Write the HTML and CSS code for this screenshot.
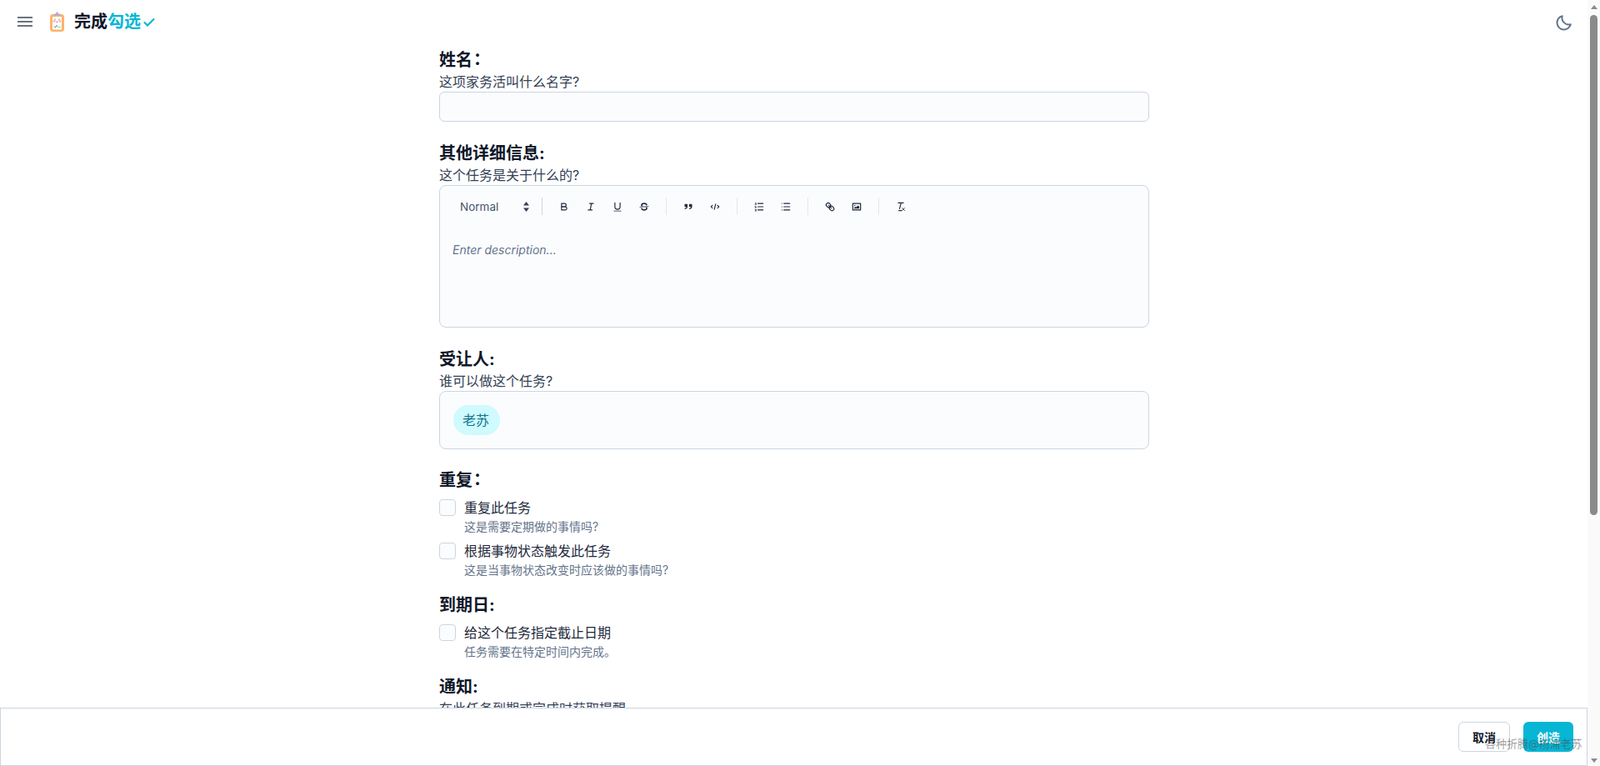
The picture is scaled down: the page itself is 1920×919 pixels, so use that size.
FILE: index.html
```html
<!doctype html>
<html lang="zh-CN">
  <head>
    <meta charset="utf-8">
    <meta name="viewport" content="width=device-width, initial-scale=1">
    <title>完成勾选</title>
    <link rel="stylesheet" href="styles.css">
  </head>
  <body>
    <div class="app">
      <div class="page">
        <header class="navbar">
          <svg class="menu-icon" viewBox="0 0 18 12"><path d="M0 1h18M0 6h18M0 11h18"/></svg>
          <svg class="logo" viewBox="0 0 17 24">
            <rect x="0" y="3" width="17" height="21" rx="3.5" fill="#fdb26e"/>
            <rect x="3" y="6" width="11" height="15.5" rx="1" fill="#fff"/>
            <path d="M5 4.5h7v-2H9.6V.4H7.4v2.1H5z" fill="#a5a9e0"/>
            <circle cx="5" cy="11.5" r="1.3" fill="#fca5a5"/>
            <circle cx="12" cy="11.5" r="1.3" fill="#fca5a5"/>
            <path d="M5.5 9l1.2.8M11.5 9l-1.2.8M7.5 12q1 1 2 0" fill="none" stroke="#44403c" stroke-width=".8"/>
            <path d="M5 17.5l1.3 1.3 2.4-2.6" fill="none" stroke="#44403c" stroke-width=".9"/>
            <path d="M9 18.5h4" stroke="#5eead4" stroke-width="1"/>
          </svg>
          <div class="brand"><span>完成</span><span class="brand-accent">勾选</span>
            <svg class="brand-check" viewBox="0 0 14 11"><path d="M1 5.5l4 4 8-8"/></svg>
          </div>
          <svg class="moon" viewBox="0 0 20 20"><path d="M17.8 12.3A8.3 8.3 0 0 1 7.7 2.2a8.3 8.3 0 1 0 10.1 10.1z"/></svg>
        </header>

        <main class="content">
          <form class="task-form">
            <h3 class="field-title">姓名<span class="wide-colon" lang="zh-TW">：</span></h3>
            <p class="field-hint">这项家务活叫什么名字?</p>
            <div class="text-input"></div>

            <h3 class="field-title">其他详细信息:</h3>
            <p class="field-hint">这个任务是关于什么的?</p>
            <div class="editor">
              <div class="toolbar">
                <div class="picker">
                  <span>Normal</span>
                  <svg class="picker-arrows" viewBox="0 0 7 12"><path d="M3.5 0L7 4.6H0zM3.5 12L0 7.4h7z"/></svg>
                </div>
                <div class="tool-group">
                  <svg class="tool" viewBox="0 0 18 18"><path class="st" d="M5,4H9.5A2.5,2.5,0,0,1,12,6.5v0A2.5,2.5,0,0,1,9.5,9H5V4Z"/><path class="st" d="M5,9h5.5A2.5,2.5,0,0,1,13,11.5v0A2.5,2.5,0,0,1,10.5,14H5V9Z"/></svg>
                  <svg class="tool" viewBox="0 0 18 18"><path class="st" d="M7 4h6M5 14h6M8 14l2-10"/></svg>
                  <svg class="tool" viewBox="0 0 18 18"><path class="st" d="M5,3V9a4,4,0,0,0,4,4h0a4,4,0,0,0,4-4V3"/><rect class="fl" x="3" y="15" width="12" height="1" rx=".5"/></svg>
                  <svg class="tool" viewBox="0 0 18 18"><path class="st thin" d="M15.5 8.5l-13 1"/><path class="fl" d="M9.007,8C6.542,7.791,6,7.519,6,6.5,6,5.792,7.283,5,9,5c1.571,0,2.765.679,2.969,1.309a1,1,0,0,0,1.9-.617C13.356,4.106,11.354,3,9,3,6.2,3,4,4.538,4,6.5a3.2,3.2,0,0,0,.5,1.843Z"/><path class="fl" d="M8.984,10C11.457,10.208,12,10.479,12,11.5c0,.708-1.283,1.5-3,1.5-1.571,0-2.765-.679-2.969-1.309a1,1,0,1,0-1.9.617C4.644,13.894,6.646,15,9,15c2.8,0,5-1.538,5-3.5a3.2,3.2,0,0,0-.5-1.843Z"/></svg>
                </div>
                <div class="tool-group">
                  <svg class="tool" viewBox="0 0 18 18"><rect class="fl st" x="4" y="5.5" width="3" height="3"/><rect class="fl st" x="11" y="5.5" width="3" height="3"/><path class="st" d="M7,8.5C7,10.4,5.5,12,4,12"/><path class="st" d="M14,8.5c0,1.9-1.5,3.5-3,3.5"/></svg>
                  <svg class="tool" viewBox="0 0 18 18"><path class="st" d="M5 7L3 9l2 2M13 7l2 2-2 2M10 5l-2 8"/></svg>
                </div>
                <div class="tool-group">
                  <svg class="tool" viewBox="0 0 18 18"><path class="st" d="M7 4h8M7 9h8M7 14h8"/><path class="st thin" d="M2.5 5.5h2"/><path class="fl" d="M3.5 2.5h1v3h-1zM2.5 2.5h1v.8h-1zM2.3 8h2.4v.8H3.2v.6h1.5v2H2.3v-.8h1.5v-.5H2.3zM2.3 13h2.4v3H2.3v-.7h1.5v-.4H2.8v-.7h1v-.4H2.3z"/></svg>
                  <svg class="tool" viewBox="0 0 18 18"><path class="st" d="M6 4h9M6 9h9M6 14h9M3 4h0M3 9h0M3 14h0"/></svg>
                </div>
                <div class="tool-group">
                  <svg class="tool" viewBox="0 0 18 18"><path class="st" d="M7 7l4 4"/><path class="st" d="M8.9,4.577a3.476,3.476,0,0,1,.36,4.679A3.476,3.476,0,0,1,4.577,8.9C3.185,7.5,2.331,6.072,3.331,5.072l1.5-1.5C5.831,2.572,7.5,3.185,8.9,4.577Z"/><path class="st" d="M13.423,9.1a3.476,3.476,0,0,0-4.679-.36,3.476,3.476,0,0,0,.36,4.679c1.392,1.392,3.181,2.246,4.321,1.392l1.5-1.5C15.928,12.169,14.815,10.5,13.423,9.1Z"/></svg>
                  <svg class="tool" viewBox="0 0 18 18"><rect class="st" x="3" y="4" width="12" height="10"/><circle class="fl" cx="6" cy="7" r="1"/><path class="fl" d="M5 12v-1l2-2 1 1 3-3 2 2v3z"/></svg>
                </div>
                <div class="tool-group last-group">
                  <svg class="tool" viewBox="0 0 18 18"><path class="st" d="M5 3h8M6 15h4M9.5 3l-2.5 9"/><path class="st thin" d="M11 11l4 4M15 11l-4 4"/></svg>
                </div>
              </div>
              <p class="placeholder">Enter description...</p>
            </div>

            <h3 class="field-title">受让人:</h3>
            <p class="field-hint">谁可以做这个任务?</p>
            <div class="assignees"><span class="chip">老苏</span></div>

            <h3 class="field-title">重复<span class="wide-colon" lang="zh-TW">：</span></h3>
            <div class="check-list">
              <div class="check-row">
                <span class="checkbox"></span>
                <div>
                  <div class="check-label">重复此任务</div>
                  <div class="check-sub">这是需要定期做的事情吗?</div>
                </div>
              </div>
              <div class="check-row">
                <span class="checkbox"></span>
                <div>
                  <div class="check-label">根据事物状态触发此任务</div>
                  <div class="check-sub">这是当事物状态改变时应该做的事情吗?</div>
                </div>
              </div>
            </div>

            <h3 class="field-title">到期日:</h3>
            <div class="check-list">
              <div class="check-row">
                <span class="checkbox"></span>
                <div>
                  <div class="check-label">给这个任务指定截止日期</div>
                  <div class="check-sub">任务需要在特定时间内完成。</div>
                </div>
              </div>
            </div>

            <h3 class="field-title">通知:</h3>
            <p class="field-hint">在此任务到期或完成时获取提醒</p>
          </form>
        </main>

        <footer class="actions">
          <button type="button" class="btn btn-cancel">取消</button>
          <button type="button" class="btn btn-create">创造</button>
        </footer>
      </div>

      <div class="scrollbar">
        <span class="arrow-up"></span>
        <span class="thumb"></span>
        <span class="arrow-down"></span>
      </div>
    </div>
    <div class="watermark">各种折腾@杨浦老苏</div>
  </body>
</html>
```

FILE: styles.css
```css
*{
    box-sizing: border-box;
}
body{
    margin:0;
    background-color: white;
    color:#0f172a;
    font-family: Inter,"Noto Sans CJK SC",sans-serif;
    overflow:hidden;
}
.app{
    display:flex;
    height:100vh;
}
.page{
    flex:1;
    min-width:0;
    display:flex;
    flex-direction: column;
}
.navbar{
    height:58px;
    flex:none;
    display:flex;
    align-items: flex-start;
    padding:14px 18px 0 21px;
}
.menu-icon{
    width:18px;
    height:12px;
    margin-top:6px;
    fill:none;
    stroke:#6b7280;
    stroke-width:2;
}
.logo{
    width:17px;
    height:24px;
    margin-left:21px;
}
.brand{
    margin-left:12px;
    display:flex;
    align-items: center;
    height:24px;
    font-size:20px;
    font-weight:700;
    line-height:24px;
}
.brand-accent{
    color:#06b6d4;
}
.brand-check{
    width:14px;
    height:11px;
    margin-left:3px;
    fill:none;
    stroke:#06b6d4;
    stroke-width:2.2;
}
.moon{
    width:20px;
    height:20px;
    margin-left:auto;
    margin-top:3px;
    fill:none;
    stroke:#64748b;
    stroke-width:2;
    stroke-linejoin: round;
}
.content{
    flex:1;
    min-height:0;
    overflow:hidden;
}
.task-form{
    width:852px;
    margin-left:527px;
}
.field-title{
    margin:24px 0 0;
    font-size:20px;
    line-height:28px;
    font-weight:700;
}
.field-title:first-child{
    margin-top:0;
}
.wide-colon{
    font-family:"Noto Sans CJK TC",sans-serif;
    line-height:1;
    margin-left:-4px;
}
.check-list + .field-title{
    margin-top:18px;
}
.field-hint{
    margin:0;
    font-size:16px;
    line-height:24px;
    color:#334155;
}
.text-input{
    height:36px;
    background-color:#fbfcfe;
    border:1px solid #cbd5e1;
    border-radius:6px;
}
.editor{
    height:171px;
    background-color:#fbfcfe;
    border:1px solid #cbd5e1;
    border-radius:8px;
}
.toolbar{
    display:flex;
    align-items: center;
    height:21px;
    margin-top:14px;
    padding-left:24px;
}
.picker{
    width:99px;
    display:flex;
    justify-content: space-between;
    align-items: center;
    padding-right:15px;
    font-size:13.5px;
    color:#475569;
    height:21px;
    border-right:1px solid #cbd5e1;
}
.picker-arrows{
    width:7px;
    height:12px;
    fill:#334155;
}
.tool-group{
    display:flex;
    align-items: center;
    gap:18px;
    height:21px;
    padding:0 19px;
    border-right:1px solid #e2e8f0;
}
.last-group{
    border-right:none;
}
.tool{
    width:14px;
    height:14px;
}
.st{
    fill:none;
    stroke:#1e293b;
    stroke-width:1.5;
    stroke-linecap: round;
    stroke-linejoin: round;
}
.thin{
    stroke-width:1;
}
.fl{
    fill:#1e293b;
}
.placeholder{
    margin:32px 0 0 15px;
    font-size:14px;
    line-height:20px;
    font-style:italic;
    color:#64748b;
}
.assignees{
    height:70px;
    padding:16px;
    background-color:#fbfcfe;
    border:1px solid #cbd5e1;
    border-radius:8px;
}
.assignees + .field-title{
    margin-top:23px;
}
.chip{
    display:inline-block;
    height:36px;
    width:56px;
    padding-left:11px;
    border-radius:18px;
    background-color:#cffafe;
    color:#0e7490;
    font-size:16px;
    line-height:36px;
}
.check-list{
    display:flex;
    flex-direction: column;
    gap:7px;
    margin-top:7px;
}
.check-row{
    display:flex;
    gap:10px;
}
.checkbox{
    width:20px;
    height:20px;
    flex:none;
    margin-top:2px;
    background-color:#fbfcfe;
    border:1px solid #cbd5e1;
    border-radius:4px;
}
.check-label{
    font-size:16px;
    line-height:24px;
    color:#1e293b;
}
.check-sub{
    margin-top:1px;
    font-size:14px;
    line-height:20px;
    color:#64748b;
}
.actions{
    flex:none;
    height:70px;
    display:flex;
    justify-content: flex-end;
    align-items: center;
    gap:16px;
    padding-right:16px;
    background-color:white;
    border:1px solid #cbd5e1;
}
.btn{
    height:36px;
    border-radius:6px;
    font-family:inherit;
    font-size:14px;
    font-weight:600;
    padding:0;
}
.btn-cancel{
    width:62px;
    background-color:white;
    border:1px solid #cbd5e1;
    color:#0f172a;
}
.btn-create{
    width:60px;
    background-color:#06b6d4;
    border:none;
    color:white;
}
.scrollbar{
    width:15px;
    flex:none;
    background-color:#fafafa;
    display:flex;
    flex-direction: column;
    align-items: center;
    padding-top:6px;
    padding-bottom:4px;
}
.arrow-up{
    width:0;
    height:0;
    border-left:4px solid transparent;
    border-right:4px solid transparent;
    border-bottom:5px solid #8a8a8a;
}
.arrow-down{
    width:0;
    height:0;
    margin-top:auto;
    border-left:4px solid transparent;
    border-right:4px solid transparent;
    border-top:5px solid #8a8a8a;
}
.thumb{
    width:9px;
    height:600px;
    margin-top:7px;
    border-radius:5px;
    background-color:#8a8a8a;
}
.watermark{
    position:absolute;
    left:1782px;
    top:882px;
    font-size:13px;
    line-height:20px;
    color:rgba(70,70,70,0.55);
    white-space:nowrap;
}
```
